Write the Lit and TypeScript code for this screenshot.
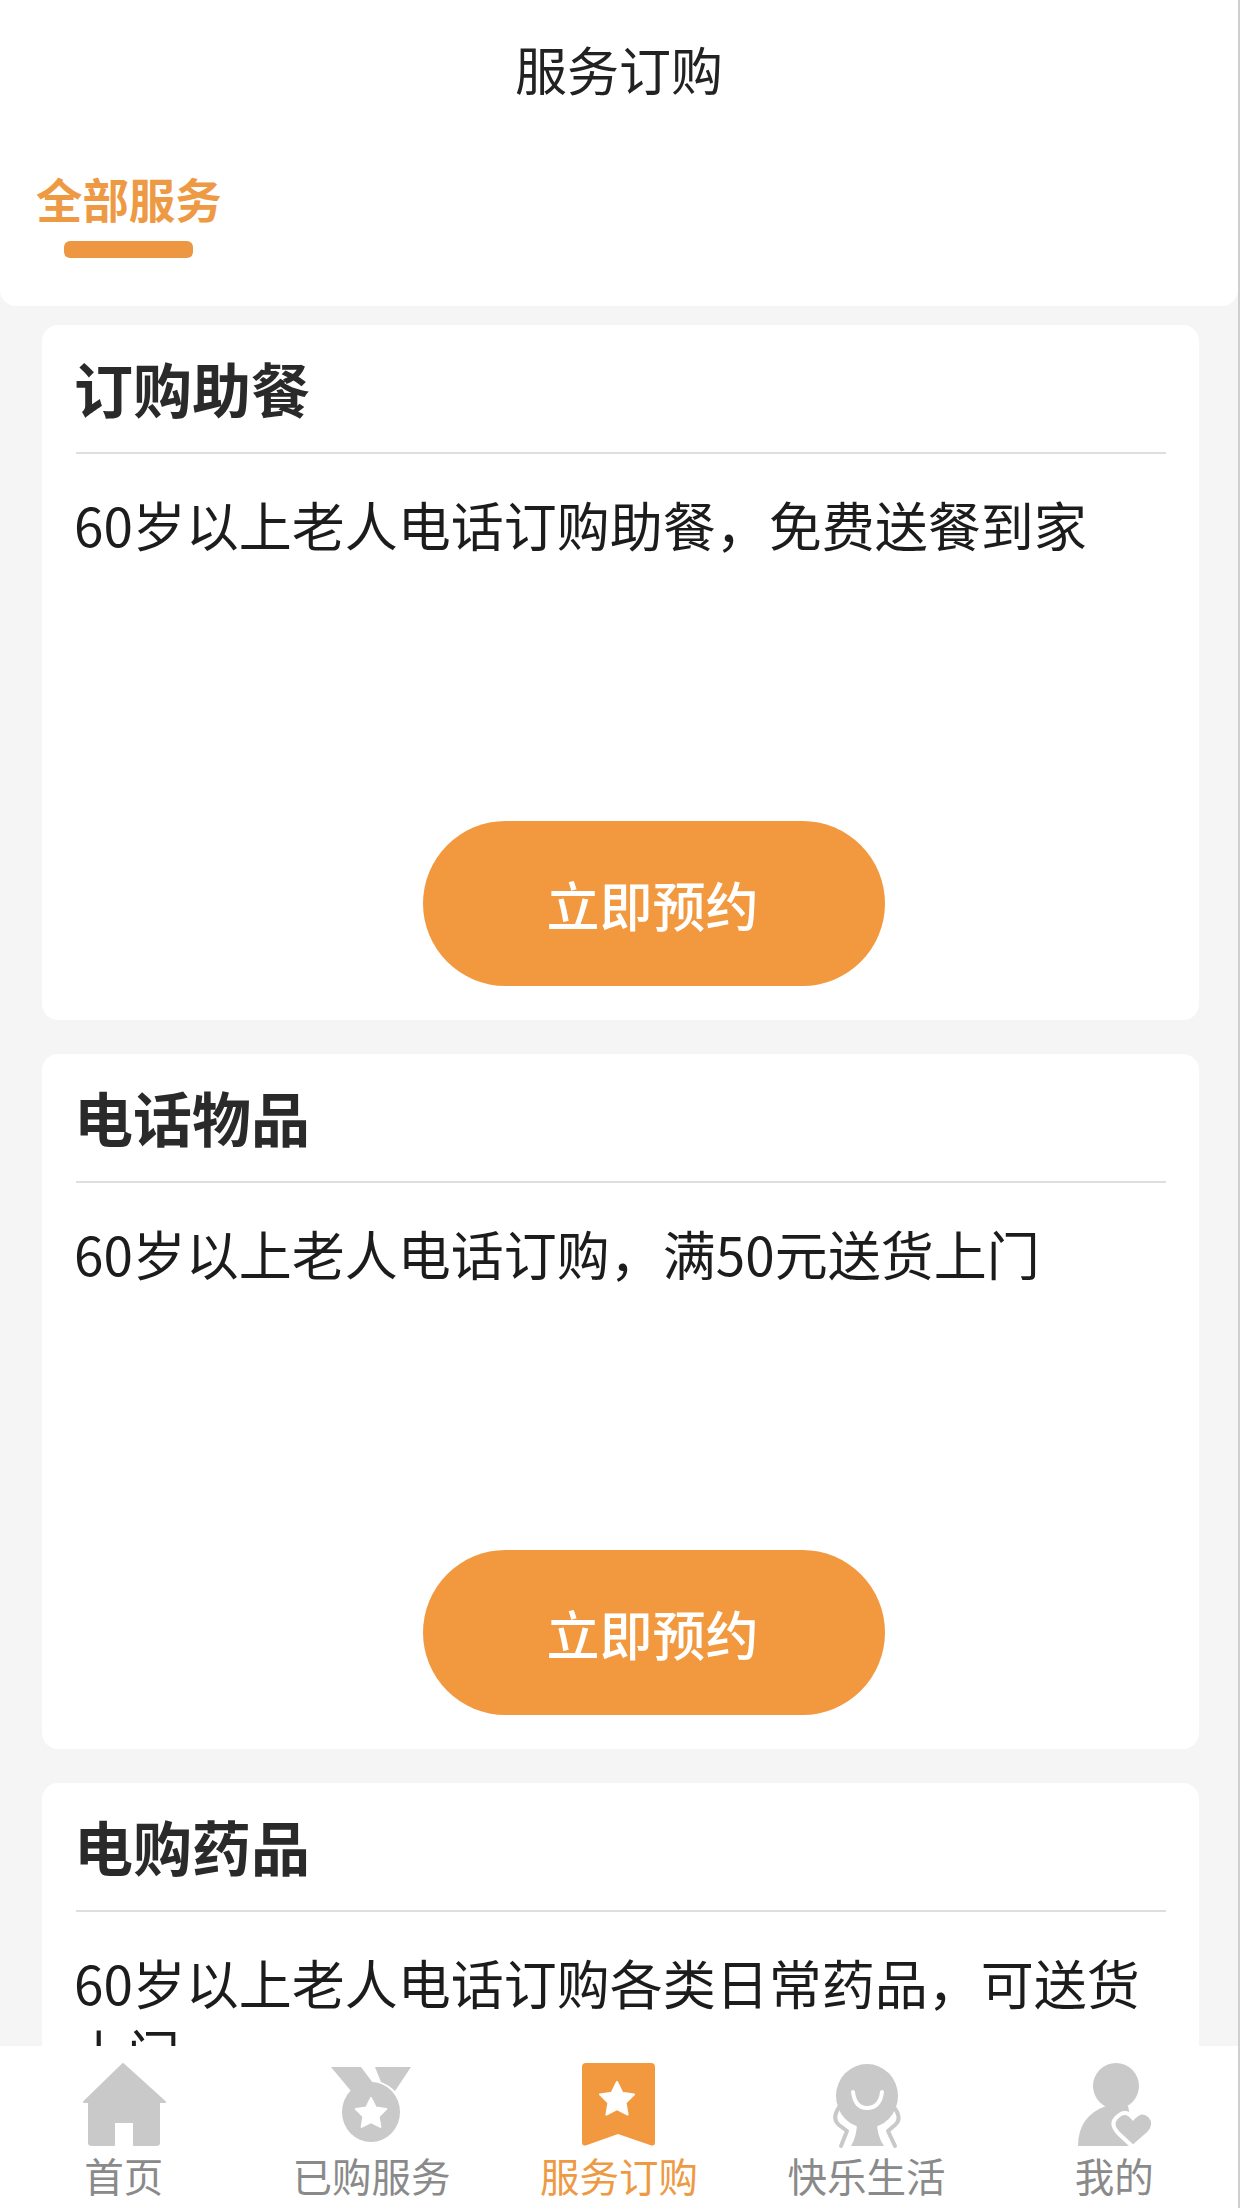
import { css, html, LitElement, svg } from 'lit';
import { customElement } from 'lit/decorators.js';

type Service = {
    title: string,
    desc: string
}

const SERVICES: Service[] = [
    { title: '订购助餐', desc: '60岁以上老人电话订购助餐，免费送餐到家' },
    { title: '电话物品', desc: '60岁以上老人电话订购，满50元送货上门' },
    { title: '电购药品', desc: '60岁以上老人电话订购各类日常药品，可送货上门' }
];

const star = (cx: number, cy: number, r: number) => {
    const pts: string[] = [];
    for (let i = 0; i < 10; i++) {
        const rad = i % 2 === 0 ? r : r * 0.5;
        const a = -Math.PI / 2 + (i * Math.PI) / 5;
        pts.push(`${(cx + rad * Math.cos(a)).toFixed(1)},${(cy + rad * Math.sin(a)).toFixed(1)}`);
    }
    return svg`<polygon points=${pts.join(' ')} fill="#fff" stroke="#fff" stroke-width="2" stroke-linejoin="round"></polygon>`;
};

const GREY = '#c9c9c9';
const ORANGE = '#f2993f';

const ICONS = {
    home: svg`
        <path fill=${GREY} stroke=${GREY} stroke-width="2" stroke-linejoin="round"
            d="M64 14 L106 52 L100 52 L100 93 Q100 95 97 95 L75 95 L75 72 L55 72 L55 95 L33 95 Q30 95 30 93 L30 52 L25 52 Z"></path>`,
    medal: svg`
        <g transform="translate(3 0)">
            <path fill=${GREY} d="M22 17 L52 17 L64 33 Q50 35 42 41 Z"></path>
            <path fill=${GREY} d="M66 17 L102 17 L86 41 Q80 35 72 32 Z"></path>
            <ellipse cx="62" cy="62" rx="29" ry="30" fill=${GREY}></ellipse>
            ${star(62, 64, 16)}
        </g>`,
    bookmark: svg`
        <path fill=${ORANGE} d="M32 13 L97 13 Q101 13 101 17 L101 92 Q101 97 96 95 L64 84 L33 95 Q28 97 28 92 L28 17 Q28 13 32 13 Z"></path>
        ${star(63, 50, 18)}`,
    happy: svg`
        <g transform="translate(-1 0)">
            <path fill="none" stroke=${GREY} stroke-width="4" stroke-linecap="round" stroke-linejoin="round"
                d="M39 56 Q30 68 38 75 L46 81 L40 96 M92 56 Q102 68 94 75 L87 81 L94 96"></path>
            <ellipse cx="66" cy="46" rx="31" ry="32" fill=${GREY}></ellipse>
            <path fill=${GREY} d="M56 72 L76 72 Q76 86 83 96 L50 96 Q56 86 56 72 Z"></path>
            <path fill="none" stroke="#fff" stroke-width="4" stroke-linecap="round" d="M52 42 Q54 58 66 58 Q79 58 81 42"></path>
        </g>`,
    person: svg`
        <g transform="translate(1 0)">
            <circle cx="66" cy="36" r="23" fill=${GREY}></circle>
            <path fill=${GREY} d="M28 96 Q28 66 56 56 L78 56 L86 96 Z"></path>
            <path fill=${GREY} stroke="#fff" stroke-width="4"
                d="M83 97 L68 83 Q60 74 66 68 Q75 58 83 68 Q92 58 100 66 Q107 74 99 83 Z"></path>
        </g>`
};

type Tab = {
    label: string,
    icon: unknown,
    active?: boolean
}

const TABS: Tab[] = [
    { label: '首页', icon: ICONS.home },
    { label: '已购服务', icon: ICONS.medal },
    { label: '服务订购', icon: ICONS.bookmark, active: true },
    { label: '快乐生活', icon: ICONS.happy },
    { label: '我的', icon: ICONS.person }
];

@customElement('app-root')
export class AppRoot extends LitElement {
    static styles = css`
        :host {
            display: block;
            width: 1242px;
            height: 2208px;
            background: #fff;
            font-family: "Noto Sans CJK SC", "Liberation Sans", sans-serif;
        }

        .page {
            display: flex;
            flex-direction: column;
            width: 1238px;
            height: 2208px;
            overflow: hidden;
            border-right: 2px solid #cfcfcf;
            background: #f5f5f5;
        }

        .header {
            flex: none;
            height: 306px;
            background: #fff;
            border-radius: 0 0 16px 16px;
        }

        .title {
            height: 138px;
            line-height: 138px;
            text-align: center;
            font-size: 52px;
            color: #222;
        }

        .tab-current {
            display: flex;
            flex-direction: column;
            align-items: center;
            width: fit-content;
            margin: 30px 0 0 36px;
        }

        .tab-current span {
            font-size: 46.4px;
            line-height: 60px;
            font-weight: 700;
            color: #ee9a45;
        }

        .tab-current i {
            display: block;
            width: 129px;
            height: 17px;
            margin-top: 13px;
            border-radius: 6px;
            background: #ee9743;
        }

        .list {
            flex: 1;
            min-height: 0;
            overflow: hidden;
            display: flex;
            flex-direction: column;
            gap: 34px;
            padding: 19px 39px 0 42px;
        }

        .card {
            flex: none;
            display: flex;
            flex-direction: column;
            height: 695px;
            padding: 0 33px 34px 34px;
            box-sizing: border-box;
            background: #fff;
            border-radius: 16px;
        }

        .card h2 {
            margin: 0;
            padding-left: 0;
            height: 127px;
            line-height: 126px;
            font-size: 59px;
            font-weight: 700;
            text-indent: -2px;
            color: #2a2a2a;
            border-bottom: 2px solid #dedede;
        }

        .card p {
            margin: 35px 0 0 -2px;
            font-size: 53px;
            line-height: 70px;
            color: #1c1c1c;
        }

        .card button {
            margin: auto 0 0 347px;
            padding: 0 3px 0 0;
            width: 462px;
            height: 165px;
            border: none;
            border-radius: 83px;
            background: #f2993f;
            color: #fff;
            font: inherit;
            font-size: 53px;
            font-weight: 500;
        }

        .tabbar {
            flex: none;
            display: grid;
            grid-template-columns: repeat(5, 1fr);
            height: 162px;
            padding-top: 4px;
            box-sizing: border-box;
            background: #fff;
        }

        .tabbar-item {
            display: flex;
            flex-direction: column;
            align-items: center;
            font-size: 39.5px;
            line-height: 44px;
            color: #8a8a8a;
        }

        .tabbar-item.active {
            color: #ee9a45;
        }

        .tabbar-item svg {
            display: block;
            width: 130px;
            height: 103px;
        }
    `;

    protected render() {
        return html`
            <div class="page">
                <div class="header">
                    <div class="title">服务订购</div>
                    <div class="tab-current"><span>全部服务</span><i></i></div>
                </div>
                <div class="list">
                    ${SERVICES.map((s) => html`
                        <div class="card">
                            <h2>${s.title}</h2>
                            <p>${s.desc}</p>
                            <button>立即预约</button>
                        </div>
                    `)}
                </div>
                <div class="tabbar">
                    ${TABS.map((t) => html`
                        <div class="tabbar-item ${t.active ? 'active' : ''}">
                            <svg viewBox="0 0 130 103">${t.icon}</svg>
                            <span>${t.label}</span>
                        </div>
                    `)}
                </div>
            </div>
        `;
    }
}
